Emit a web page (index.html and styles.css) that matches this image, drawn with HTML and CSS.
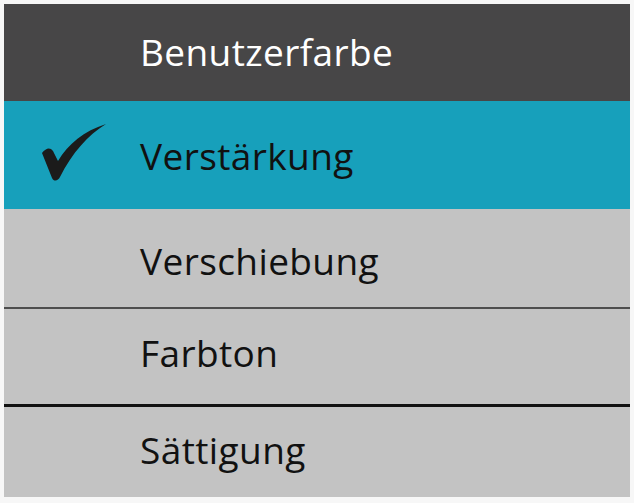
FILE: index.html
```html
<!DOCTYPE html>
<html lang="de">
<head>
    <meta charset="UTF-8">
    <meta name="viewport" content="width=device-width, initial-scale=1.0">
    <title>Benutzerfarbe</title>
    <link rel="stylesheet" href="styles.css">
</head>
<body>
    <div class="menu">
        <div class="menu-title">
            <span class="mark"></span>
            <span class="label">Benutzerfarbe</span>
        </div>
        <div class="menu-item selected">
            <span class="mark">
                <svg width="72" height="66" viewBox="0 0 72 66">
                    <path d="M4,34 C8,29 12,28 15,32 L20,42 C30,25 46,12 68,5 C50,16 34,34 22,58 C20,62 16,63 14,59 Z" fill="#1b1b1b"/>
                </svg>
            </span>
            <span class="label">Verstärkung</span>
        </div>
        <div class="menu-item row-1">
            <span class="mark"></span>
            <span class="label">Verschiebung</span>
        </div>
        <div class="menu-item row-2">
            <span class="mark"></span>
            <span class="label">Farbton</span>
        </div>
        <div class="menu-item row-3">
            <span class="mark"></span>
            <span class="label">Sättigung</span>
        </div>
    </div>
</body>
</html>
```

FILE: styles.css
```css
body {
    margin: 0;
    background-color: #f7f7f7;
    font-family: "Open Sans", "Noto Sans", sans-serif;
}
.menu {
    margin: 4px;
    height: 493px;
    display: flex;
    flex-direction: column;
    background-color: #c3c3c3;
}
.menu-title,
.menu-item {
    display: flex;
    flex-direction: row;
    align-items: center;
    flex-shrink: 0;
    box-sizing: border-box;
    font-size: 37px;
    letter-spacing: 0.4px;
    color: #111;
}
.mark {
    width: 136px;
    flex-shrink: 0;
    display: flex;
    align-items: center;
}
.mark svg {
    margin-left: 34px;
    margin-top: -6px;
}
.menu-title {
    height: 97px;
    padding-bottom: 2px;
    background-color: #474647;
    color: #fff;
}
.selected {
    height: 108px;
    background-color: #17a0bb;
}
.row-1 {
    height: 100px;
    padding-top: 4px;
    border-bottom: 2px solid #4e4e4e;
}
.row-2 {
    height: 98px;
    padding-bottom: 8px;
    border-bottom: 3px solid #111;
}
.row-3 {
    height: 90px;
    padding-bottom: 6px;
}
```
